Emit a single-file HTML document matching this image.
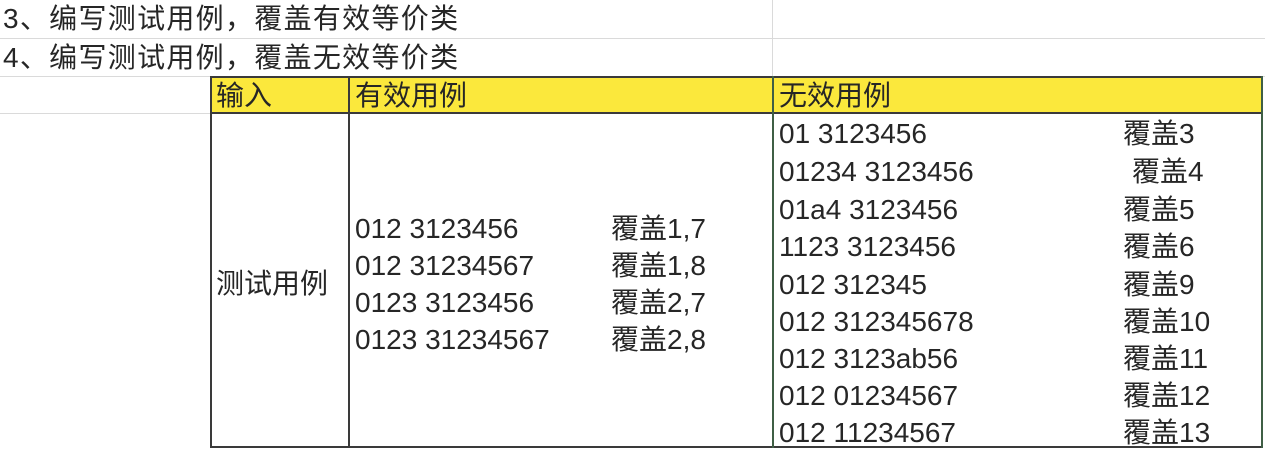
<!DOCTYPE html>
<html><head><meta charset="utf-8"><style>
body{margin:0;width:1265px;height:449px;background:#fff;position:relative;overflow:hidden;font-family:"Liberation Sans","Noto Sans CJK SC",sans-serif;color:#262626;font-size:28px}
div{position:absolute}
.t{line-height:28px;white-space:nowrap}
.h{height:1px;background:#dadada}
.v{width:1px;background:#dadada}
.d{background:#3a3a3a}
</style></head><body>
<div class="h" style="left:0;top:38px;width:1265px"></div>
<div class="h" style="left:0;top:76px;width:1265px"></div>
<div class="h" style="left:0;top:113px;width:210px"></div>
<div class="v" style="left:772px;top:0;height:76px"></div>
<div style="left:210px;top:76px;width:1053px;height:37px;background:#fbe83c"></div>
<div class="d" style="left:210px;top:76px;width:1053px;height:2px"></div>
<div class="d" style="left:210px;top:112px;width:1053px;height:2px"></div>
<div class="d" style="left:210px;top:446px;width:1053px;height:2px"></div>
<div class="d" style="left:210px;top:76px;width:2px;height:372px"></div>
<div class="d" style="left:348px;top:76px;width:2px;height:372px"></div>
<div style="left:772px;top:76px;width:2px;height:372px;background:#3f5f45"></div>
<div style="left:1261px;top:76px;width:2px;height:372px;background:#3f5f45"></div>
<div class="t" style="left:3px;top:5px;letter-spacing:1.3px">3、编写测试用例，覆盖有效等价类</div>
<div class="t" style="left:3px;top:44px;letter-spacing:1.3px">4、编写测试用例，覆盖无效等价类</div>
<div class="t" style="left:216px;top:82px">输入</div>
<div class="t" style="left:355px;top:82px">有效用例</div>
<div class="t" style="left:779px;top:82px">无效用例</div>
<div class="t" style="left:216px;top:270px">测试用例</div>
<div class="t" style="left:355px;top:215px">012 3123456</div><div class="t" style="left:611px;top:215px">覆盖1,7</div>
<div class="t" style="left:355px;top:252px">012 31234567</div><div class="t" style="left:611px;top:252px">覆盖1,8</div>
<div class="t" style="left:355px;top:289px">0123 3123456</div><div class="t" style="left:611px;top:289px">覆盖2,7</div>
<div class="t" style="left:355px;top:326px">0123 31234567</div><div class="t" style="left:611px;top:326px">覆盖2,8</div>
<div class="t" style="left:779px;top:120px">01 3123456</div><div class="t" style="left:1123px;top:120px">覆盖3</div>
<div class="t" style="left:779px;top:158px">01234 3123456</div><div class="t" style="left:1132px;top:158px">覆盖4</div>
<div class="t" style="left:779px;top:196px">01a4 3123456</div><div class="t" style="left:1123px;top:196px">覆盖5</div>
<div class="t" style="left:779px;top:233px">1123 3123456</div><div class="t" style="left:1123px;top:233px">覆盖6</div>
<div class="t" style="left:779px;top:271px">012 312345</div><div class="t" style="left:1123px;top:271px">覆盖9</div>
<div class="t" style="left:779px;top:308px">012 312345678</div><div class="t" style="left:1123px;top:308px">覆盖10</div>
<div class="t" style="left:779px;top:345px">012 3123ab56</div><div class="t" style="left:1123px;top:345px">覆盖11</div>
<div class="t" style="left:779px;top:382px">012 01234567</div><div class="t" style="left:1123px;top:382px">覆盖12</div>
<div class="t" style="left:779px;top:419px">012 11234567</div><div class="t" style="left:1123px;top:419px">覆盖13</div>
</body></html>
